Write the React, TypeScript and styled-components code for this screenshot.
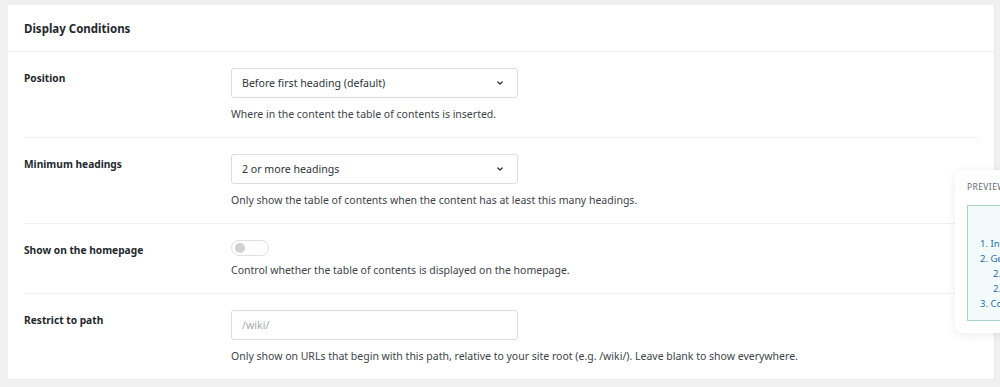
import styled, { createGlobalStyle } from "styled-components";

const GlobalStyle = createGlobalStyle`
  body {
    margin: 0;
    background: #f0f0f1;
    font-family: "Noto Sans", "Open Sans", sans-serif;
    color: #1d2327;
    overflow: hidden;
  }
`;

interface ISetting {
  key: string;
  label: string;
  help: string;
  kind: "select" | "toggle" | "input";
  value?: string;
}

const settings: ISetting[] = [
  {
    key: "position",
    label: "Position",
    kind: "select",
    value: "Before first heading (default)",
    help: "Where in the content the table of contents is inserted.",
  },
  {
    key: "min",
    label: "Minimum headings",
    kind: "select",
    value: "2 or more headings",
    help: "Only show the table of contents when the content has at least this many headings.",
  },
  {
    key: "home",
    label: "Show on the homepage",
    kind: "toggle",
    help: "Control whether the table of contents is displayed on the homepage.",
  },
  {
    key: "path",
    label: "Restrict to path",
    kind: "input",
    value: "/wiki/",
    help: "Only show on URLs that begin with this path, relative to your site root (e.g. /wiki/). Leave blank to show everywhere.",
  },
];

const tocItems = [
  { key: "1", text: "1. Introduction", sub: false },
  { key: "2", text: "2. Getting started", sub: false },
  { key: "2.1", text: "2.1 Installation", sub: true },
  { key: "2.2", text: "2.2 Configuration", sub: true },
  { key: "3", text: "3. Conclusion", sub: false },
];

const App = () => {
  return (
    <Page>
      <GlobalStyle />
      <Card>
        <CardHeader>Display Conditions</CardHeader>
        <CardBody>
          {settings.map((s) => (
            <Row key={s.key}>
              <Label>{s.label}</Label>
              <Field>
                {s.kind === "select" && (
                  <Select>
                    <span>{s.value}</span>
                    <svg width="10" height="10" viewBox="0 0 10 10">
                      <path
                        d="M2.8 4 L5 6 L7.2 4"
                        fill="none"
                        stroke="#2c3338"
                        strokeWidth="1.3"
                        strokeLinecap="round"
                        strokeLinejoin="round"
                      />
                    </svg>
                  </Select>
                )}
                {s.kind === "input" && <TextInput>{s.value}</TextInput>}
                {s.kind === "toggle" && (
                  <Toggle>
                    <Knob />
                  </Toggle>
                )}
                <Help compact={s.kind === "toggle"}>{s.help}</Help>
              </Field>
            </Row>
          ))}
        </CardBody>
      </Card>

      <PreviewPanel>
        <PreviewTitle>Preview</PreviewTitle>
        <TocBox>
          <TocTitle>Contents</TocTitle>
          {tocItems.map((item) => (
            <TocItem key={item.key} sub={item.sub}>
              {item.text}
            </TocItem>
          ))}
        </TocBox>
      </PreviewPanel>
    </Page>
  );
};

export default App;

const Page = styled.div`
  position: relative;
  width: 1000px;
  height: 387px;
  padding: 5px 0 0 8px;
  box-sizing: border-box;
`;

const Card = styled.div`
  width: 987px;
  background: #fff;
  border: 1px solid #e9e9ea;
  border-top: none;
  border-left: none;
  box-sizing: border-box;
`;

const CardHeader = styled.div`
  height: 47px;
  padding: 0 16px;
  display: flex;
  align-items: center;
  font-size: 11.5px;
  font-weight: 700;
  color: #23282d;
  border-bottom: 1px solid #f0f0f1;
  box-sizing: border-box;
`;

const CardBody = styled.div`
  padding: 0 16px 0 16px;
`;

const Row = styled.div`
  display: grid;
  grid-template-columns: 207px 1fr;
  padding: 16px 0 15px;
  border-bottom: 1px solid #f0f0f1;

  &:last-child {
    border-bottom: none;
  }
`;

const Label = styled.div`
  padding-top: 1px;
  font-size: 10.2px;
  font-weight: 700;
  line-height: 18px;
  color: #23282d;
`;

const Field = styled.div`
  display: flex;
  flex-direction: column;
  align-items: flex-start;
`;

const Select = styled.div`
  width: 287px;
  height: 30px;
  box-sizing: border-box;
  border: 1px solid #dcdcde;
  border-radius: 3px;
  padding: 0 12px 0 10px;
  display: flex;
  align-items: center;
  justify-content: space-between;
  font-size: 10.6px;
  color: #2c3338;
`;

const TextInput = styled.div`
  width: 287px;
  height: 30px;
  box-sizing: border-box;
  border: 1px solid #dcdcde;
  border-radius: 3px;
  padding: 0 10px;
  display: flex;
  align-items: center;
  font-size: 10.6px;
  color: #a7aaad;
`;

const Toggle = styled.div`
  width: 38px;
  height: 16px;
  box-sizing: border-box;
  border: 1px solid #dfe0e1;
  border-radius: 9px;
  display: flex;
  align-items: center;
  padding-left: 3px;
`;

const Knob = styled.div`
  width: 10px;
  height: 10px;
  border-radius: 50%;
  background: #d0d1d3;
`;

const Help = styled.div<{ compact: boolean }>`
  margin-top: ${(props) => (props.compact ? "6px" : "8px")};
  font-size: 10.5px;
  line-height: 16px;
  color: #3c434a;
`;

const PreviewPanel = styled.div`
  position: absolute;
  left: 955px;
  top: 170px;
  width: 240px;
  height: 163px;
  background: #fff;
  border-radius: 8px;
  box-shadow: 0 2px 10px rgba(0, 0, 0, 0.08);
  padding: 12px;
  box-sizing: border-box;
`;

const PreviewTitle = styled.div`
  font-size: 8.5px;
  letter-spacing: 0.4px;
  text-transform: uppercase;
  color: #646970;
  line-height: 10px;
`;

const TocBox = styled.div`
  margin-top: 13px;
  height: 116px;
  border: 1px solid #a9cfcf;
  background: #f3fafa;
  padding: 10px 12px;
  box-sizing: border-box;
`;

const TocTitle = styled.div`
  text-align: center;
  font-size: 10px;
  font-weight: 700;
  line-height: 16px;
  color: #1d2327;
  margin-bottom: 4px;
`;

const TocItem = styled.div<{ sub: boolean }>`
  font-size: 9.5px;
  line-height: 15px;
  color: #2271b1;
  padding-left: ${(props) => (props.sub ? "13px" : "0")};
`;
